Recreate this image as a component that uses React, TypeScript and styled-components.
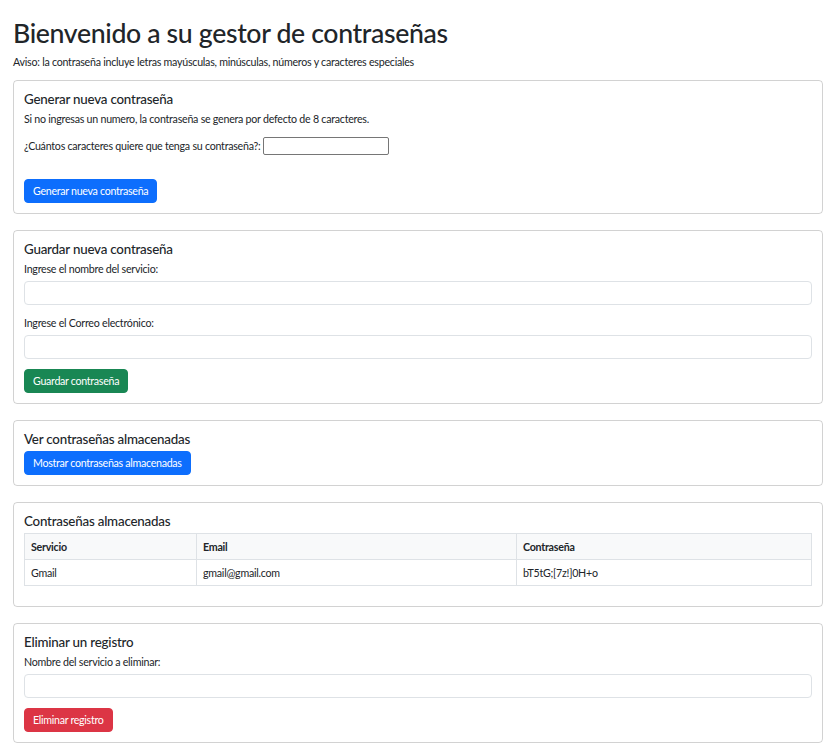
import React from "react";
import styled, { createGlobalStyle } from "styled-components";

const GlobalStyle = createGlobalStyle`
  html, body {
    margin: 0;
    padding: 0;
    background: #ffffff;
  }
  body {
    font-family: Lato, "Open Sans", sans-serif;
    color: #212529;
    font-size: 10.67px;
    line-height: 16px;
    letter-spacing: -0.25px;
  }
  * { box-sizing: border-box; }
`;

const Page = styled.main`
  padding: 17px 14px 12px 13px;
`;

const Title = styled.h1`
  font-size: 26.67px;
  font-weight: 500;
  line-height: 32px;
  letter-spacing: -0.35px;
  margin: 0 0 5px;
`;

const Text = styled.p<{ $gap?: number }>`
  margin: 0 0 ${(p) => p.$gap ?? 10}px;
  font-size: 10.67px;
  line-height: 16px;
`;

const Card = styled.section`
  border: 1px solid rgba(0, 0, 0, 0.175);
  border-radius: 4px;
  padding: 10px;
  margin-bottom: 16px;
`;

const CardTitle = styled.h5`
  font-size: 13.33px;
  font-weight: 500;
  line-height: 16px;
  letter-spacing: -0.2px;
  margin: 0 0 4px;
`;

const InlineRow = styled.div`
  display: flex;
  align-items: center;
  gap: 3px;
  margin-bottom: 24px;
`;

const SmallInput = styled.input`
  width: 126px;
  height: 18px;
  border: 1px solid #767676;
  border-radius: 2px;
  padding: 0 2px;
  font: inherit;
`;

const Field = styled.div`
  margin-bottom: 10px;
`;

const Label = styled.label`
  display: block;
  margin-bottom: 4px;
  font-size: 10.67px;
  line-height: 16px;
`;

const Input = styled.input`
  display: block;
  width: 100%;
  height: 24px;
  border: 1px solid #dee2e6;
  border-radius: 4px;
  padding: 3px 8px;
  font: inherit;
  background: #fff;
`;

const colors = {
  primary: "#0d6efd",
  success: "#198754",
  danger: "#dc3545",
};

const Button = styled.button<{ $variant: keyof typeof colors }>`
  display: block;
  height: 24px;
  font-family: inherit;
  font-size: 10.67px;
  line-height: 16px;
  font-weight: 400;
  letter-spacing: -0.3px;
  color: #fff;
  background: ${(p) => colors[p.$variant]};
  border: 1px solid ${(p) => colors[p.$variant]};
  border-radius: 4px;
  padding: 3px 8px;
  cursor: pointer;
`;

const Table = styled.table`
  width: 100%;
  border-collapse: collapse;
  margin-bottom: 10px;
  font-size: 10.67px;
  line-height: 16px;
`;

const Th = styled.th<{ $w?: number }>`
  text-align: left;
  font-weight: 700;
  background: #f8f9fa;
  border: 1px solid #dee2e6;
  padding: 5px 6px 4px;
  width: ${(p) => (p.$w ? `${p.$w}px` : "auto")};
`;

const Td = styled.td`
  border: 1px solid #dee2e6;
  padding: 5px 6px 4px;
`;

export default function App() {
  return (
    <>
      <GlobalStyle />
      <Page>
        <Title>Bienvenido a su gestor de contraseñas</Title>
        <Text>
          Aviso: la contraseña incluye letras mayúsculas, minúsculas, números y caracteres especiales
        </Text>

        <Card>
          <CardTitle>Generar nueva contraseña</CardTitle>
          <Text>Si no ingresas un numero, la contraseña se genera por defecto de 8 caracteres.</Text>
          <InlineRow>
            <span>¿Cuántos caracteres quiere que tenga su contraseña?:</span>
            <SmallInput type="text" />
          </InlineRow>
          <Button $variant="primary">Generar nueva contraseña</Button>
        </Card>

        <Card>
          <CardTitle>Guardar nueva contraseña</CardTitle>
          <Field>
            <Label>Ingrese el nombre del servicio:</Label>
            <Input type="text" />
          </Field>
          <Field>
            <Label>Ingrese el Correo electrónico:</Label>
            <Input type="text" />
          </Field>
          <Button $variant="success">Guardar contraseña</Button>
        </Card>

        <Card>
          <CardTitle>Ver contraseñas almacenadas</CardTitle>
          <Button $variant="primary">Mostrar contraseñas almacenadas</Button>
        </Card>

        <Card>
          <CardTitle>Contraseñas almacenadas</CardTitle>
          <Table>
            <thead>
              <tr>
                <Th $w={172}>Servicio</Th>
                <Th $w={320}>Email</Th>
                <Th>Contraseña</Th>
              </tr>
            </thead>
            <tbody>
              <tr>
                <Td>Gmail</Td>
                <Td>gmail@gmail.com</Td>
                <Td>bT5tG;[7z!]0H+o</Td>
              </tr>
            </tbody>
          </Table>
        </Card>

        <Card>
          <CardTitle>Eliminar un registro</CardTitle>
          <Field>
            <Label>Nombre del servicio a eliminar:</Label>
            <Input type="text" />
          </Field>
          <Button $variant="danger">Eliminar registro</Button>
        </Card>
      </Page>
    </>
  );
}
